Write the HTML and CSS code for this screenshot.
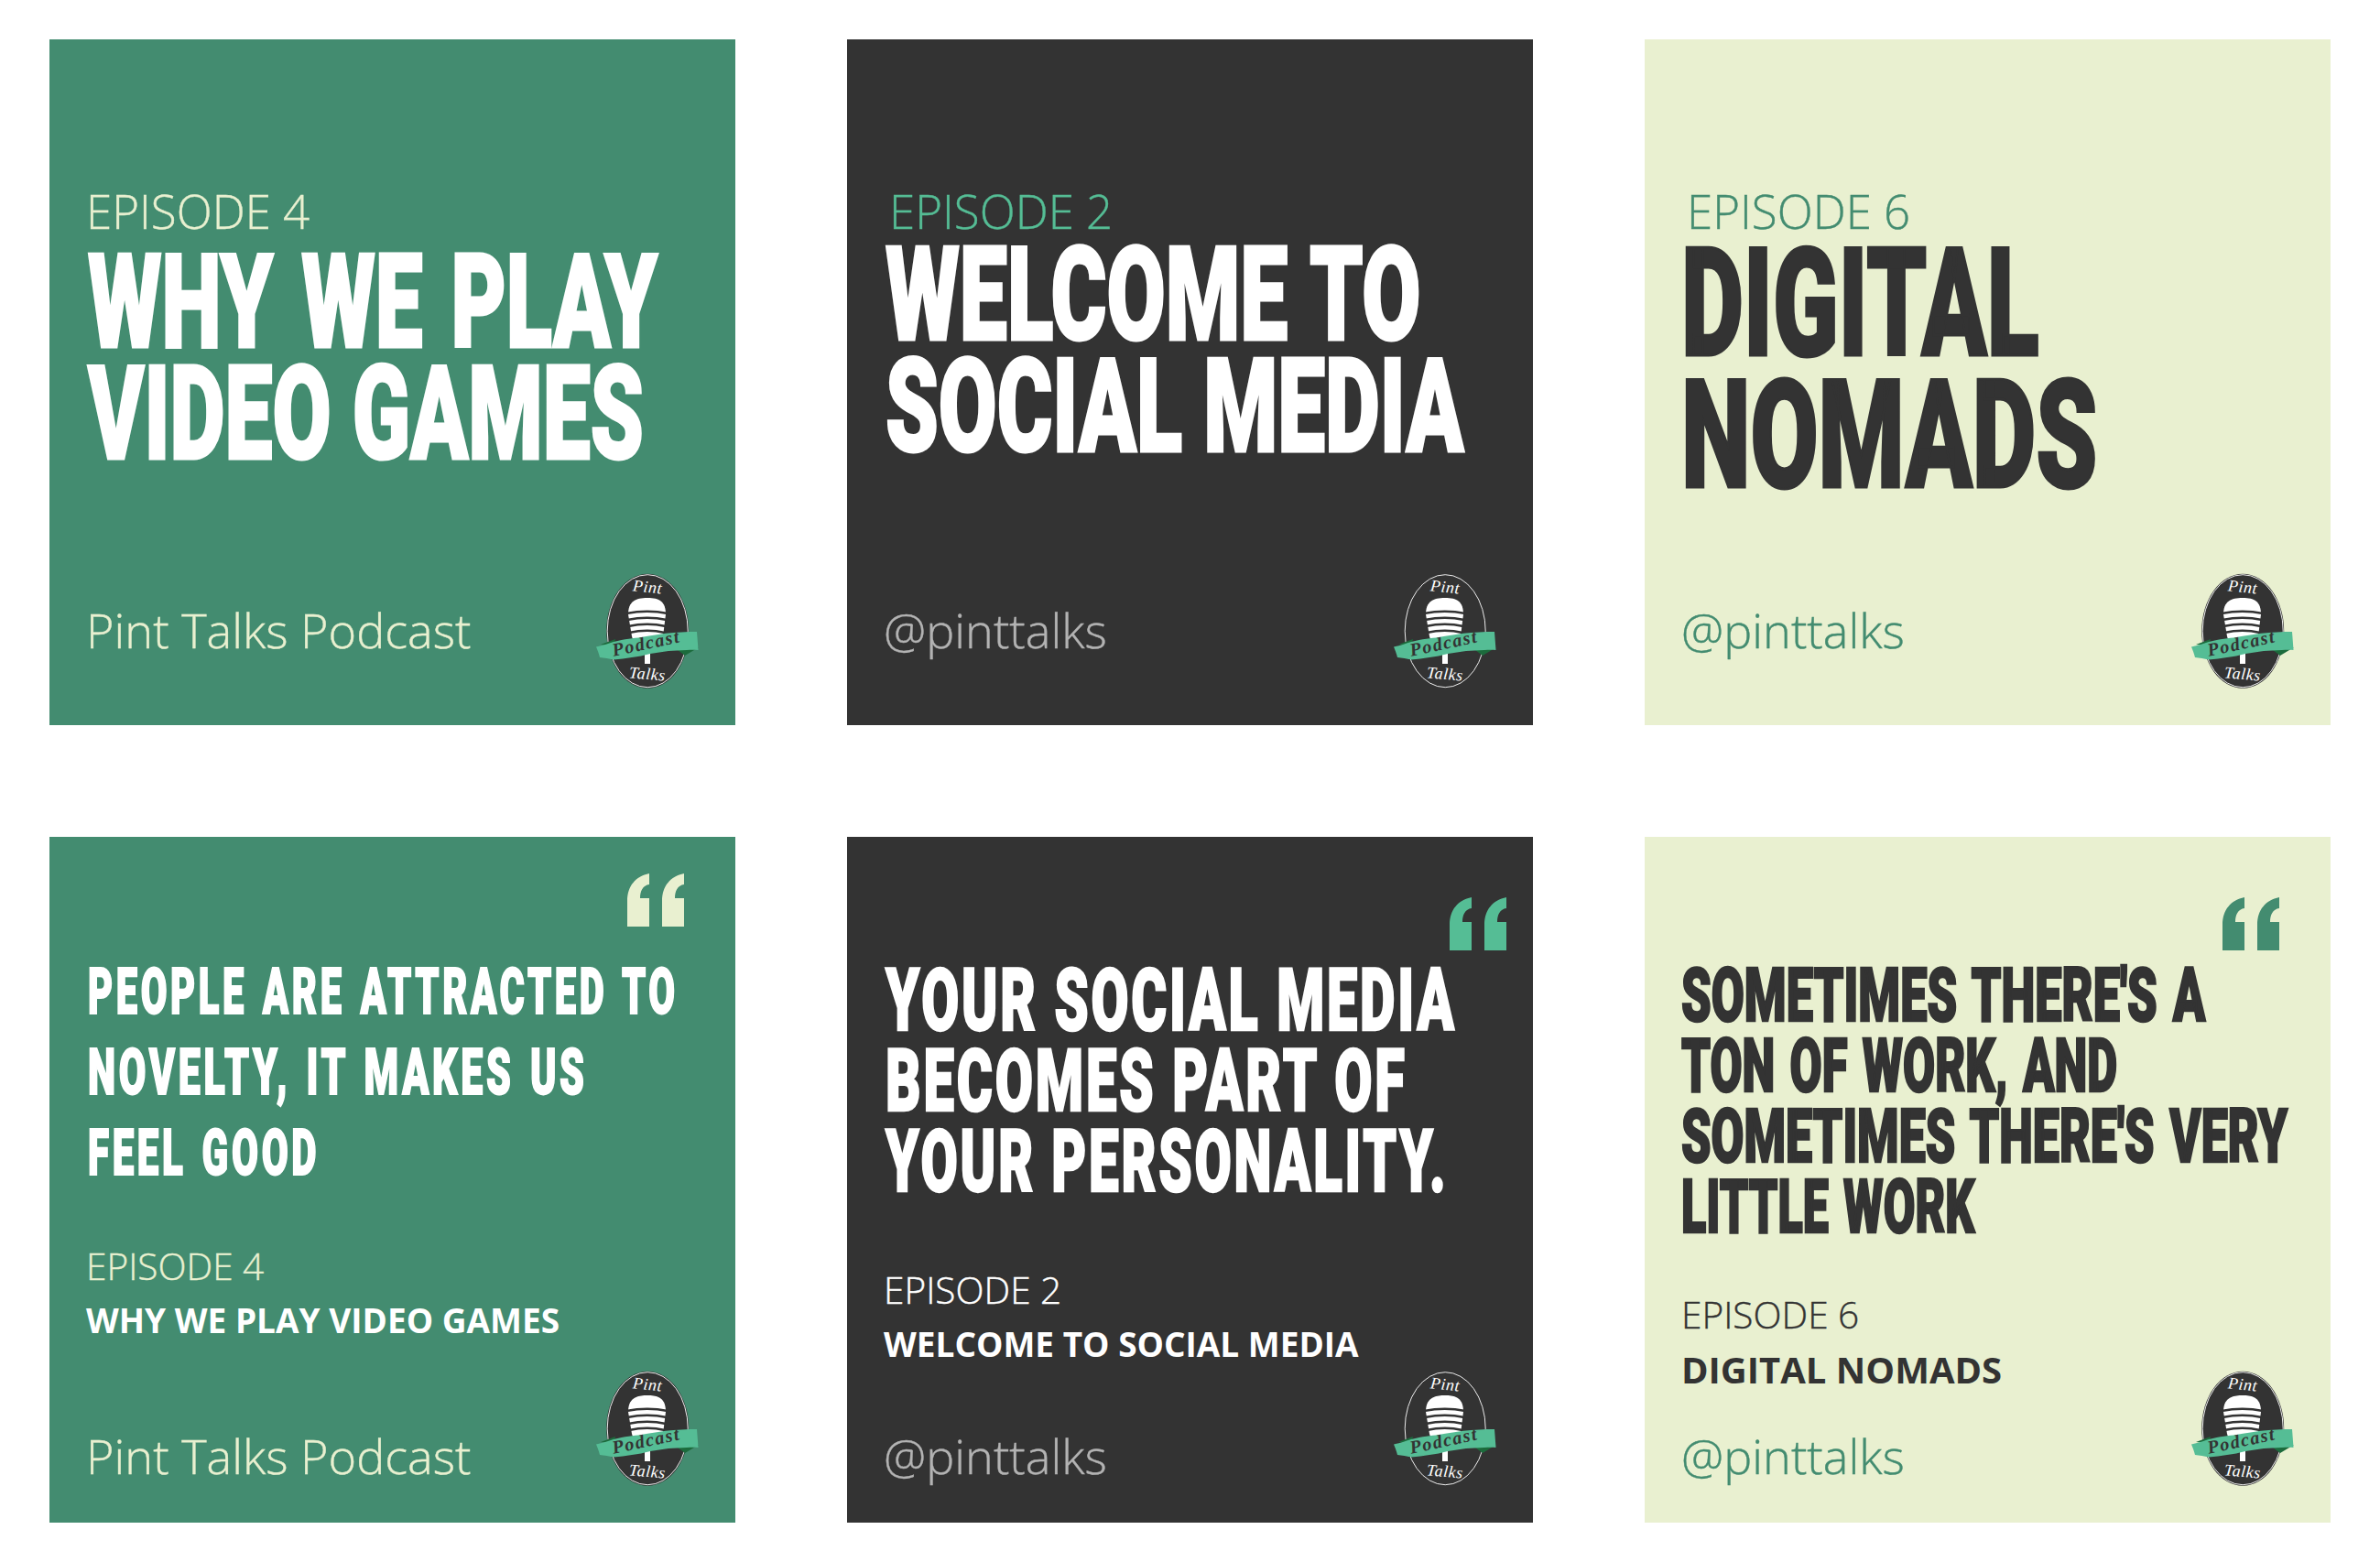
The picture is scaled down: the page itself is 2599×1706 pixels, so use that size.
FILE: index.html
```
<!DOCTYPE html>
<html lang="en">
<head>
<meta charset="utf-8">
<title>Pint Talks Podcast</title>
<link rel="stylesheet" href="styles.css">
</head>
<body>
<main class="grid">

<section class="card green">
  <p class="label">EPISODE 4</p>
  <h2 class="title title-a">
    <span class="line sx-why">WHY WE PLAY</span>
    <span class="line sx-video">VIDEO GAMES</span>
  </h2>
  <footer class="foot">
    <span class="handle">Pint Talks Podcast</span>
    <svg class="logo" viewBox="30 22 116 130" role="img" aria-label="Pint Talks Podcast logo"><ellipse class="l-body" cx="87.2" cy="88.2" rx="45" ry="62.5"/><ellipse class="l-ring" cx="87.2" cy="88.2" rx="44" ry="61.5"/><path class="l-mic" d="M66 70C66 56 74 52 87 52S107 56 107 70L104 94C103 100 95 104 87 104S71 100 70 94Z"/><path class="l-slot" d="M64 69Q87 64.5 109 69M65 76Q87 71.5 108 76M66 83Q87 78.5 107 83M67 90Q87 85.5 106 90"/><rect class="l-mic" x="84" y="110" width="6" height="14"/><path class="l-fold" d="M36 103L52 97L50 104ZM120 109L143 106L128 115Z"/><path class="l-rib" d="M31 105.5C38 104 44 102 50 100C62 97 72 96 80 95C90 93 98 92 107 90.7C118 89.5 130 89 141 89C141.5 95 142 102 142.5 109C138 108.5 134 108.7 130 109C123 109.3 116 109.5 110 110C103 111 97 112 90 113C83 115 77 116 70 117C63 118 57 119 50 119.5C45 118.5 40 117.5 35 117C34 113 32.500 109 31 105.500Z"/><text class="l-txt l-lt" x="87" y="46" text-anchor="middle" transform="rotate(6 87 41)">Pint</text><text class="l-txt l-pod" x="86" y="108" text-anchor="middle" transform="rotate(-12 86 103)">Podcast</text><text class="l-txt l-lt" x="87" y="141" text-anchor="middle" transform="rotate(5 87 134)">Talks</text></svg>
  </footer>
</section>

<section class="card dark">
  <p class="label label-2">EPISODE 2</p>
  <h2 class="title title-b">
    <span class="line sx-welcome">WELCOME TO</span>
    <span class="line sx-social">SOCIAL MEDIA</span>
  </h2>
  <footer class="foot">
    <span class="handle">@pinttalks</span>
    <svg class="logo" viewBox="30 22 116 130" role="img" aria-label="Pint Talks Podcast logo"><ellipse class="l-body" cx="87.2" cy="88.2" rx="45" ry="62.5"/><ellipse class="l-ring" cx="87.2" cy="88.2" rx="44" ry="61.5"/><path class="l-mic" d="M66 70C66 56 74 52 87 52S107 56 107 70L104 94C103 100 95 104 87 104S71 100 70 94Z"/><path class="l-slot" d="M64 69Q87 64.5 109 69M65 76Q87 71.5 108 76M66 83Q87 78.5 107 83M67 90Q87 85.5 106 90"/><rect class="l-mic" x="84" y="110" width="6" height="14"/><path class="l-fold" d="M36 103L52 97L50 104ZM120 109L143 106L128 115Z"/><path class="l-rib" d="M31 105.5C38 104 44 102 50 100C62 97 72 96 80 95C90 93 98 92 107 90.7C118 89.5 130 89 141 89C141.5 95 142 102 142.5 109C138 108.5 134 108.7 130 109C123 109.3 116 109.5 110 110C103 111 97 112 90 113C83 115 77 116 70 117C63 118 57 119 50 119.5C45 118.5 40 117.5 35 117C34 113 32.500 109 31 105.500Z"/><text class="l-txt l-lt" x="87" y="46" text-anchor="middle" transform="rotate(6 87 41)">Pint</text><text class="l-txt l-pod" x="86" y="108" text-anchor="middle" transform="rotate(-12 86 103)">Podcast</text><text class="l-txt l-lt" x="87" y="141" text-anchor="middle" transform="rotate(5 87 134)">Talks</text></svg>
  </footer>
</section>

<section class="card cream">
  <p class="label label-3">EPISODE 6</p>
  <h2 class="title title-c">
    <span class="line sx-digital">DIGITAL</span>
    <span class="line sx-nomads">NOMADS</span>
  </h2>
  <footer class="foot">
    <span class="handle">@pinttalks</span>
    <svg class="logo" viewBox="30 22 116 130" role="img" aria-label="Pint Talks Podcast logo"><ellipse class="l-body" cx="87.2" cy="88.2" rx="45" ry="62.5"/><ellipse class="l-ring" cx="87.2" cy="88.2" rx="44" ry="61.5"/><path class="l-mic" d="M66 70C66 56 74 52 87 52S107 56 107 70L104 94C103 100 95 104 87 104S71 100 70 94Z"/><path class="l-slot" d="M64 69Q87 64.5 109 69M65 76Q87 71.5 108 76M66 83Q87 78.5 107 83M67 90Q87 85.5 106 90"/><rect class="l-mic" x="84" y="110" width="6" height="14"/><path class="l-fold" d="M36 103L52 97L50 104ZM120 109L143 106L128 115Z"/><path class="l-rib" d="M31 105.5C38 104 44 102 50 100C62 97 72 96 80 95C90 93 98 92 107 90.7C118 89.5 130 89 141 89C141.5 95 142 102 142.5 109C138 108.5 134 108.7 130 109C123 109.3 116 109.5 110 110C103 111 97 112 90 113C83 115 77 116 70 117C63 118 57 119 50 119.5C45 118.5 40 117.5 35 117C34 113 32.500 109 31 105.500Z"/><text class="l-txt l-lt" x="87" y="46" text-anchor="middle" transform="rotate(6 87 41)">Pint</text><text class="l-txt l-pod" x="86" y="108" text-anchor="middle" transform="rotate(-12 86 103)">Podcast</text><text class="l-txt l-lt" x="87" y="141" text-anchor="middle" transform="rotate(5 87 134)">Talks</text></svg>
  </footer>
</section>

<section class="card green quote-card q-a">
  <svg class="quote" viewBox="0 0 62 58" aria-hidden="true"><path d="M0 58V30C0 14 9 3 24 0V12C17 13 14 19 14 27H24V58ZM38 58V30C38 14 47 3 62 0V12C55 13 52 19 52 27H62V58Z"/></svg>
  <blockquote class="words words-a">
    <span class="line sx-people">PEOPLE ARE ATTRACTED TO</span>
    <span class="line sx-novelty">NOVELTY, IT MAKES US</span>
    <span class="line sx-feel">FEEL GOOD</span>
  </blockquote>
  <p class="ep-label">EPISODE 4</p>
  <p class="ep-name">WHY WE PLAY VIDEO GAMES</p>
  <footer class="foot">
    <span class="handle">Pint Talks Podcast</span>
    <svg class="logo" viewBox="30 22 116 130" role="img" aria-label="Pint Talks Podcast logo"><ellipse class="l-body" cx="87.2" cy="88.2" rx="45" ry="62.5"/><ellipse class="l-ring" cx="87.2" cy="88.2" rx="44" ry="61.5"/><path class="l-mic" d="M66 70C66 56 74 52 87 52S107 56 107 70L104 94C103 100 95 104 87 104S71 100 70 94Z"/><path class="l-slot" d="M64 69Q87 64.5 109 69M65 76Q87 71.5 108 76M66 83Q87 78.5 107 83M67 90Q87 85.5 106 90"/><rect class="l-mic" x="84" y="110" width="6" height="14"/><path class="l-fold" d="M36 103L52 97L50 104ZM120 109L143 106L128 115Z"/><path class="l-rib" d="M31 105.5C38 104 44 102 50 100C62 97 72 96 80 95C90 93 98 92 107 90.7C118 89.5 130 89 141 89C141.5 95 142 102 142.5 109C138 108.5 134 108.7 130 109C123 109.3 116 109.5 110 110C103 111 97 112 90 113C83 115 77 116 70 117C63 118 57 119 50 119.5C45 118.5 40 117.5 35 117C34 113 32.500 109 31 105.500Z"/><text class="l-txt l-lt" x="87" y="46" text-anchor="middle" transform="rotate(6 87 41)">Pint</text><text class="l-txt l-pod" x="86" y="108" text-anchor="middle" transform="rotate(-12 86 103)">Podcast</text><text class="l-txt l-lt" x="87" y="141" text-anchor="middle" transform="rotate(5 87 134)">Talks</text></svg>
  </footer>
</section>

<section class="card dark quote-card q-b">
  <svg class="quote" viewBox="0 0 62 58" aria-hidden="true"><path d="M0 58V30C0 14 9 3 24 0V12C17 13 14 19 14 27H24V58ZM38 58V30C38 14 47 3 62 0V12C55 13 52 19 52 27H62V58Z"/></svg>
  <blockquote class="words words-b">
    <span class="line sx-your">YOUR SOCIAL MEDIA</span>
    <span class="line sx-becomes">BECOMES PART OF</span>
    <span class="line sx-person">YOUR PERSONALITY.</span>
  </blockquote>
  <p class="ep-label">EPISODE 2</p>
  <p class="ep-name">WELCOME TO SOCIAL MEDIA</p>
  <footer class="foot">
    <span class="handle">@pinttalks</span>
    <svg class="logo" viewBox="30 22 116 130" role="img" aria-label="Pint Talks Podcast logo"><ellipse class="l-body" cx="87.2" cy="88.2" rx="45" ry="62.5"/><ellipse class="l-ring" cx="87.2" cy="88.2" rx="44" ry="61.5"/><path class="l-mic" d="M66 70C66 56 74 52 87 52S107 56 107 70L104 94C103 100 95 104 87 104S71 100 70 94Z"/><path class="l-slot" d="M64 69Q87 64.5 109 69M65 76Q87 71.5 108 76M66 83Q87 78.5 107 83M67 90Q87 85.5 106 90"/><rect class="l-mic" x="84" y="110" width="6" height="14"/><path class="l-fold" d="M36 103L52 97L50 104ZM120 109L143 106L128 115Z"/><path class="l-rib" d="M31 105.5C38 104 44 102 50 100C62 97 72 96 80 95C90 93 98 92 107 90.7C118 89.5 130 89 141 89C141.5 95 142 102 142.5 109C138 108.5 134 108.7 130 109C123 109.3 116 109.5 110 110C103 111 97 112 90 113C83 115 77 116 70 117C63 118 57 119 50 119.5C45 118.5 40 117.5 35 117C34 113 32.500 109 31 105.500Z"/><text class="l-txt l-lt" x="87" y="46" text-anchor="middle" transform="rotate(6 87 41)">Pint</text><text class="l-txt l-pod" x="86" y="108" text-anchor="middle" transform="rotate(-12 86 103)">Podcast</text><text class="l-txt l-lt" x="87" y="141" text-anchor="middle" transform="rotate(5 87 134)">Talks</text></svg>
  </footer>
</section>

<section class="card cream quote-card q-c">
  <svg class="quote" viewBox="0 0 62 58" aria-hidden="true"><path d="M0 58V30C0 14 9 3 24 0V12C17 13 14 19 14 27H24V58ZM38 58V30C38 14 47 3 62 0V12C55 13 52 19 52 27H62V58Z"/></svg>
  <blockquote class="words words-c">
    <span class="line sx-some">SOMETIMES THERE'S A</span>
    <span class="line sx-ton">TON OF WORK, AND</span>
    <span class="line sx-very">SOMETIMES THERE'S VERY</span>
    <span class="line sx-little">LITTLE WORK</span>
  </blockquote>
  <p class="ep-label">EPISODE 6</p>
  <p class="ep-name">DIGITAL NOMADS</p>
  <footer class="foot">
    <span class="handle">@pinttalks</span>
    <svg class="logo" viewBox="30 22 116 130" role="img" aria-label="Pint Talks Podcast logo"><ellipse class="l-body" cx="87.2" cy="88.2" rx="45" ry="62.5"/><ellipse class="l-ring" cx="87.2" cy="88.2" rx="44" ry="61.5"/><path class="l-mic" d="M66 70C66 56 74 52 87 52S107 56 107 70L104 94C103 100 95 104 87 104S71 100 70 94Z"/><path class="l-slot" d="M64 69Q87 64.5 109 69M65 76Q87 71.5 108 76M66 83Q87 78.5 107 83M67 90Q87 85.5 106 90"/><rect class="l-mic" x="84" y="110" width="6" height="14"/><path class="l-fold" d="M36 103L52 97L50 104ZM120 109L143 106L128 115Z"/><path class="l-rib" d="M31 105.5C38 104 44 102 50 100C62 97 72 96 80 95C90 93 98 92 107 90.7C118 89.5 130 89 141 89C141.5 95 142 102 142.5 109C138 108.5 134 108.7 130 109C123 109.3 116 109.5 110 110C103 111 97 112 90 113C83 115 77 116 70 117C63 118 57 119 50 119.5C45 118.5 40 117.5 35 117C34 113 32.500 109 31 105.500Z"/><text class="l-txt l-lt" x="87" y="46" text-anchor="middle" transform="rotate(6 87 41)">Pint</text><text class="l-txt l-pod" x="86" y="108" text-anchor="middle" transform="rotate(-12 86 103)">Podcast</text><text class="l-txt l-lt" x="87" y="141" text-anchor="middle" transform="rotate(5 87 134)">Talks</text></svg>
  </footer>
</section>

</main>
</body>
</html>
```
FILE: styles.css
```
* { box-sizing: border-box; }
html, body { margin: 0; background: #fff; }
body { font-family: "Open Sans", "Noto Sans", sans-serif; }
p, h2, blockquote { margin: 0; }

.grid {
  display: grid;
  grid-template-columns: repeat(3, 749px);
  grid-auto-rows: 749px;
  gap: 122px;
  padding: 43px 0 0 54px;
}

.card {
  --fg: #fff;
  --soft: #fff;
  --handle: #fff;
  --quote: #fff;
  --small: #fff;
  display: flex;
  flex-direction: column;
  padding: 153px 0 0 40px;
  overflow: hidden;
  color: var(--fg);
}
.quote-card { padding-top: 66px; }
.green { background: #438c70; --soft: #e9f0d0; --handle: #e9f0d0; --quote: #e9f0d0; --small: #e9f0d0; }
.dark  { background: #333333; --soft: #55bd95; --handle: #b3b3b3; --quote: #55bd95; --small: #fff; }
.cream { background: #e9f0d0; --fg: #333333; --soft: #438c70; --handle: #438c70; --quote: #438c70; --small: #333333; }

.label {
  font-size: 51px;
  font-weight: 300;
  line-height: 68px;
  color: var(--soft);
  -webkit-text-stroke: .4px currentColor;
}
.label-2 { margin-left: 6px; }
.label-3 { margin-left: 6px; }

/* Heavy condensed headline type: Roboto Black narrowed line by line */
.title, .words {
  font-family: Roboto, "Liberation Sans", sans-serif;
  font-weight: 900;
  color: var(--fg);
  margin-left: 2px;
}
.line {
  display: block;
  width: max-content;
  white-space: nowrap;
  transform: scaleX(var(--sx));
  transform-origin: 0 50%;
  -webkit-text-stroke: 3px var(--fg);
}
.title-a { font-size: 142px; line-height: 122px; margin-top: 6px; }
.title-b { font-size: 142px; line-height: 122px; margin-top: -2px; }
.title-c { font-size: 166px; line-height: 144px; margin-top: -4px; margin-left: 0; }

.sx-why { --sx: .652; word-spacing: 12px; }
.sx-video { --sx: .654; }
.sx-welcome { --sx: .655; word-spacing: 5px; }
.sx-social { --sx: .651; }
.sx-digital { --sx: .634; }
.sx-nomads { --sx: .647; }
.sx-people { --sx: .596; word-spacing: 5px; }
.sx-novelty { --sx: .613; word-spacing: 5px; }
.sx-feel { --sx: .602; word-spacing: 5px; }
.sx-your { --sx: .625; }
.sx-becomes { --sx: .629; }
.sx-person { --sx: .614; }
.sx-some { --sx: .638; word-spacing: 6px; }
.sx-ton { --sx: .620; word-spacing: 6px; }
.sx-very { --sx: .634; word-spacing: 6px; }
.sx-little { --sx: .613; word-spacing: 6px; }

.quote {
  display: block;
  flex: none;
  width: 62px;
  height: 58px;
  align-self: flex-end;
  fill: var(--quote);
}
.q-a { padding-top: 40px; }
.q-a .quote { margin-right: 56px; }
.q-b .quote { margin-right: 29px; }
.q-c .quote { margin-right: 56px; }

.words-a { font-size: 70px; line-height: 88px; letter-spacing: 6px; margin-top: 27px; }
.words-b { font-size: 95px; line-height: 88px; letter-spacing: 4.5px; margin-top: 11px; }
.words-c { font-size: 82px; line-height: 77px; margin-top: 11px; margin-left: 0; }
.words-a .line { -webkit-text-stroke-width: 2px; }
.words-b .line { -webkit-text-stroke-width: 2.5px; }
.words-c .line { -webkit-text-stroke-width: 2.5px; }

.ep-label {
  font-size: 40.6px;
  font-weight: 300;
  line-height: 54px;
  color: var(--small);
  -webkit-text-stroke: .4px currentColor;
}
.ep-name {
  font-size: 37px;
  font-weight: 700;
  line-height: 50px;
  margin-top: 7px;
  color: #fff;
}
.words-a + .ep-label { margin-top: 53px; }
.words-b + .ep-label { margin-top: 69px; }
.words-c + .ep-label { margin-top: 52px; }
.q-c .ep-name { font-size: 40px; margin-top: 8px; color: #333333; }

.foot {
  display: flex;
  justify-content: space-between;
  align-items: flex-end;
  margin-top: auto;
  height: 71px;
  margin-bottom: 38px;
  padding-right: 37px;
}
.handle {
  font-size: 52.2px;
  font-weight: 300;
  line-height: 71px;
  color: var(--handle);
  -webkit-text-stroke: .4px currentColor;
}
.card:not(.quote-card) .handle { margin-bottom: 31px; }
.logo {
  display: block;
  flex: none;
  width: 116px;
  height: 130px;
  margin: -59px 0 1px;
}
.l-body { fill: #333333; }
.l-ring { fill: none; stroke: #fff; stroke-width: .9; }
.l-mic { fill: #fff; }
.l-slot { fill: none; stroke: #333333; stroke-width: 2.6; }
.l-fold { fill: #1c6b3c; }
.l-rib { fill: #55bd95; }
.l-txt { font-family: "Liberation Serif", serif; font-style: italic; }
.l-lt { font-size: 18px; letter-spacing: .5px; fill: #fff; }
.l-pod { font-size: 20px; font-weight: 700; letter-spacing: 1.6px; fill: #333333; }
```
